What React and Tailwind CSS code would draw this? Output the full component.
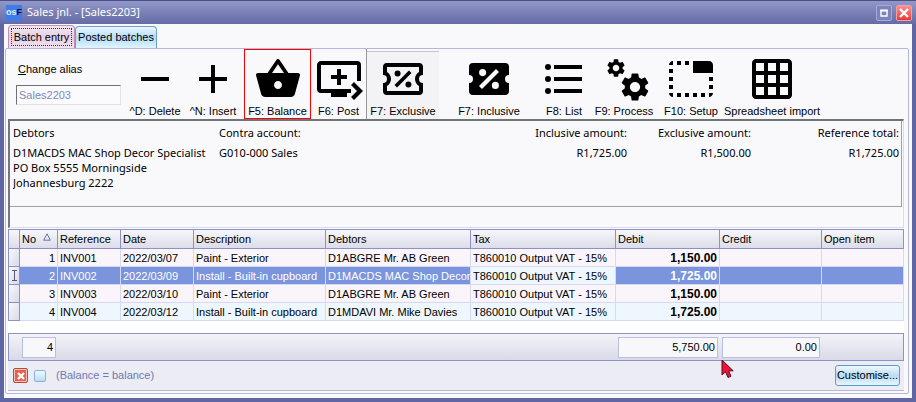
import React from "react";
import {
  MdAdd,
  MdGridOn,
  MdQueuePlayNext,
  MdRemove,
  MdSettings,
  MdShoppingBasket,
  MdTabUnselected,
} from "react-icons/md";

const PERCENT =
  "M15.5 7L17 8.5L8.5 17L7 15.5L15.5 7M8.81 7.04A1.77 1.77 0 0 1 8.81 10.58A1.77 1.77 0 0 1 8.81 7.04M15.19 13.42A1.77 1.77 0 0 1 15.19 16.96A1.77 1.77 0 0 1 15.19 13.42Z";
const TICKET =
  "M4 4A2 2 0 0 0 2 6V10A2 2 0 0 1 4 12A2 2 0 0 1 2 14V18A2 2 0 0 0 4 20H20A2 2 0 0 0 22 18V14A2 2 0 0 1 20 12A2 2 0 0 1 22 10V6A2 2 0 0 0 20 4Z";
const TICKET_INSIDE =
  "M4 6V8.54C5.24 9.26 6 10.57 6 12S5.24 14.74 4 15.46V18H20V15.46C18.76 14.74 18 13.43 18 12S18.76 9.26 20 8.54V6Z";

function TicketSolid() {
  return (
    <svg viewBox="0 0 24 24" className="size-12" aria-hidden="true">
      <path fillRule="evenodd" d={TICKET + PERCENT} />
    </svg>
  );
}

function TicketOutline() {
  return (
    <svg viewBox="0 0 24 24" className="size-12" aria-hidden="true">
      <path fillRule="evenodd" d={TICKET + TICKET_INSIDE} />
      <g transform="translate(12 12) scale(.85) translate(-12 -12)">
        <path d={PERCENT} />
      </g>
    </svg>
  );
}

function BulletList() {
  return (
    <svg viewBox="0 0 24 24" className="size-12" aria-hidden="true">
      <path d="M7 5H21V7H7ZM7 11H21V13H7ZM7 17H21V19H7Z" />
      <circle cx="4" cy="6" r="1.5" />
      <circle cx="4" cy="12" r="1.5" />
      <circle cx="4" cy="18" r="1.5" />
    </svg>
  );
}

function Cogs() {
  return (
    <svg viewBox="0 0 48 48" className="size-12 overflow-visible" aria-hidden="true">
      <MdSettings x="5" y="2" size={22} />
      <MdSettings x="18" y="15" size={34} />
    </svg>
  );
}

const TOOLS = [
  { label: "^D: Delete", icon: <MdRemove className="size-12" />, cls: "w-[50px]" },
  { label: "^N: Insert", icon: <MdAdd className="size-12" />, cls: "ml-1.5 w-[54px]" },
  {
    label: "F5: Balance",
    icon: <MdShoppingBasket className="size-12" />,
    cls: "ml-1 w-[67px] outline outline-1 -outline-offset-1 outline-[#ff0000]",
  },
  { label: "F6: Post", icon: <MdQueuePlayNext className="size-12" />, cls: "w-[55px]" },
  {
    label: "F7: Exclusive",
    icon: <TicketOutline />,
    cls: "w-[73px] border-l border-[#9a9a9e] bg-linear-to-b from-transparent from-[2px] via-[#9a9a9e] via-[2px] to-[#f3f3f5] to-[3px]",
  },
  { label: "F7: Inclusive", icon: <TicketSolid />, cls: "ml-4 w-[68px]" },
  { label: "F8: List", icon: <BulletList />, cls: "ml-4 w-[50px]" },
  { label: "F9: Process", icon: <Cogs />, cls: "ml-1 w-[62px]" },
  { label: "F10: Setup", icon: <MdTabUnselected className="size-12" />, cls: "ml-1.5 w-[60px]" },
  { label: "Spreadsheet import", icon: <MdGridOn className="size-12" />, cls: "ml-1 w-[94px]" },
];

const ROWS = [
  ["1", "INV001", "2022/03/07", "Paint - Exterior", "D1ABGRE Mr. AB Green", "1,150.00"],
  ["2", "INV002", "2022/03/09", "Install - Built-in cupboard", "D1MACDS MAC Shop Decor", "1,725.00"],
  ["3", "INV003", "2022/03/10", "Paint - Exterior", "D1ABGRE Mr. AB Green", "1,150.00"],
  ["4", "INV004", "2022/03/12", "Install - Built-in cupboard", "D1MDAVI Mr. Mike Davies", "1,725.00"],
];

const HEADS = ["No", "Reference", "Date", "Description", "Debtors", "Tax", "Debit", "Credit", "Open item"];

const HEAD_CELL =
  "h-[19px] overflow-hidden border-b border-r border-[#8c93c4] bg-linear-to-b from-[#f6f6fa] to-[#dcdde9] p-0 pl-0.5 text-left font-normal whitespace-nowrap";

function TitleBar() {
  return (
    <header className="flex h-6 items-center border-t border-[#4a4f85] bg-linear-to-b from-[#9297c8] via-[#7b81b6] to-[#656ba6] pr-1 pl-1.5">
      <span className="flex size-4 items-center justify-center bg-[#3f7ce8] text-[9px] font-bold text-white" aria-hidden="true">
        <span className="text-[#e4f0ff]">os</span>
        <span className="text-[#0b1230]">F</span>
      </span>
      <h1 className="ml-[5px] font-['Noto_Sans','Open_Sans',sans-serif] text-[11px] text-white">Sales jnl. - [Sales2203]</h1>
      <button type="button" aria-label="Maximise" className="ml-auto flex size-4 items-center justify-center rounded-xs border border-[#a5abd6] bg-[#7c83b8]">
        <svg viewBox="0 0 8 8" className="size-2" aria-hidden="true">
          <path d="M1 1.5H7V7H1Z" fill="none" stroke="white" strokeWidth="1.4" />
          <path d="M.3 .6H7.7V2.4H.3Z" fill="white" />
        </svg>
      </button>
      <button type="button" aria-label="Close" className="ml-1 flex size-4 items-center justify-center rounded-xs border border-[#f3a0a6] bg-linear-to-b from-[#f49090] to-[#ee3030]">
        <svg viewBox="0 0 8 8" className="size-2.5" aria-hidden="true">
          <path d="M.8 .8L7.2 7.2M7.2 .8L.8 7.2" stroke="white" strokeWidth="1.9" />
        </svg>
      </button>
    </header>
  );
}

function Toolbar() {
  return (
    <div className="flex h-[70px] items-stretch">
      <div className="ml-2 flex w-[105px] flex-col pt-3">
        <label htmlFor="alias" className="pl-0.5 leading-4">
          <u>C</u>hange alias
        </label>
        <input
          id="alias"
          defaultValue="Sales2203"
          className="mt-2 h-5 w-full border border-t-[#707070] border-r-[#e2e2e4] border-b-[#e2e2e4] border-l-[#707070] bg-[#fbfbfd] px-0.5 text-[#8088b8] outline-none"
        />
      </div>
      <div className="ml-[9px] flex">
        {TOOLS.map((t) => (
          <button key={t.label} type="button" className={"flex h-full shrink-0 flex-col items-center pt-1.5 whitespace-nowrap " + t.cls}>
            {t.icon}
            <span className="leading-4">{t.label}</span>
          </button>
        ))}
      </div>
    </div>
  );
}

function Details() {
  return (
    <section className="h-[109px] border-t-2 border-r border-b border-l-2 border-t-[#6f7476] border-r-[#dcdce4] border-b-[#dcdce4] border-l-[#77777b] font-['Noto_Sans','Open_Sans',sans-serif] text-[11px]">
      <div className="mr-px grid h-[86px] grid-cols-[206px_284px_124px_124px_1fr] border-r border-b border-[#a0a0a0] pt-1 pr-0.5 pl-[3px] whitespace-nowrap">
        <div className="overflow-hidden">
          <div className="mb-1 leading-4">Debtors</div>
          <div className="leading-[15px]">D1MACDS MAC Shop Decor Specialist</div>
          <div className="leading-[15px]">PO Box 5555 Morningside</div>
          <div className="leading-[15px]">Johannesburg 2222</div>
        </div>
        <div>
          <div className="mb-1 leading-4">Contra account:</div>
          <div className="leading-[15px]">G010-000 Sales</div>
        </div>
        {[
          ["Inclusive amount:", "R1,725.00"],
          ["Exclusive amount:", "R1,500.00"],
          ["Reference total:", "R1,725.00"],
        ].map(([label, value]) => (
          <div key={label} className="text-right">
            <div className="mb-1 leading-4">{label}</div>
            <div className="leading-[15px]">{value}</div>
          </div>
        ))}
      </div>
    </section>
  );
}

function Ledger() {
  return (
    <table className="w-full table-fixed border-separate border-spacing-0 border-t border-l border-[#8c93c4] leading-4">
      <colgroup>
        <col className="w-[11px]" />
        <col className="w-[38px]" />
        <col className="w-[63px]" />
        <col className="w-[73px]" />
        <col className="w-[132px]" />
        <col className="w-[145px]" />
        <col className="w-[145px]" />
        <col className="w-[104px]" />
        <col className="w-[102px]" />
        <col />
      </colgroup>
      <thead>
        <tr>
          <td className={HEAD_CELL} />
          {HEADS.map((h) => (
            <th key={h} scope="col" className={HEAD_CELL}>
              {h === "No" ? (
                <span className="flex items-center justify-between pr-1.5">
                  No
                  <svg viewBox="0 0 8 8" className="mb-1 size-2" aria-hidden="true">
                    <path d="M4 .8L7.3 7.2H.7Z" fill="none" stroke="#6870b0" />
                  </svg>
                </span>
              ) : (
                h
              )}
            </th>
          ))}
        </tr>
      </thead>
      <tbody>
        {ROWS.map((r, i) => {
          const selected = i === 1;
          const plain = i % 2 ? "bg-[#eef6fe]" : "bg-[#faf5fa]";
          const cell =
            "h-[18px] overflow-hidden border-r border-b border-[#d6d9f2] p-0 whitespace-nowrap " +
            (selected ? "bg-[#7a95de] text-white" : plain);
          return (
            <tr key={r[0]}>
              <td className="h-[18px] border-r border-b border-[#8c93c4] bg-linear-to-br from-[#f8f8fc] to-[#d9dae8] p-0">
                {selected && (
                  <svg viewBox="0 0 7 11" className="mx-auto h-[11px] w-[7px]" aria-label="Editing">
                    <path d="M1 .5H6M1 10.5H6M3.5 .5V10.5" stroke="#555a78" fill="none" />
                  </svg>
                )}
              </td>
              <td className={cell + " pr-0.5 text-right"}>{r[0]}</td>
              <td className={cell + " pl-0.5"}>{r[1]}</td>
              <td className={cell + " pl-0.5"}>{r[2]}</td>
              <td className={cell + " pl-0.5"}>{r[3]}</td>
              <td className={cell + " pl-0.5"}>{r[4]}</td>
              <td className={"h-[18px] overflow-hidden border-r border-b border-[#d6d9f2] p-0 pl-0.5 whitespace-nowrap " + plain}>
                T860010 Output VAT - 15%
              </td>
              <td className={cell + " pr-0.5 text-right text-xs font-bold"}>{r[5]}</td>
              <td className={cell} />
              <td className={cell} />
            </tr>
          );
        })}
      </tbody>
    </table>
  );
}

const TOTAL = "flex h-[21px] items-center justify-end border border-[#b9bfdf] bg-[#f8f8fc] pr-0.5";

export default function App() {
  return (
    <main className="flex min-h-screen flex-col bg-[#656ba6] font-['Liberation_Sans',Arial,sans-serif] text-[11px] text-black">
      <TitleBar />
      <div className="flex grow flex-col border-x-4 border-b-4 border-[#5f66a3] bg-[#f9f9fc]">
        <nav className="flex h-6 items-end pl-1">
          <button type="button" className="mt-px h-[23px] w-[67px] self-start rounded-t-sm border border-b-0 border-[#c58fb4] bg-linear-to-b from-[#f3e8f2] via-[#e6cfe2] to-[#f0e2ef] px-0.5">
            <span className="block border border-dotted border-[#333] leading-4 whitespace-nowrap">Batch entry</span>
          </button>
          <button type="button" className="h-[22px] w-[82px] rounded-t-sm border border-b-0 border-[#6a9fd2] bg-linear-to-b from-[#eaf6ff] via-[#b4dcfa] to-[#e0f4ff] whitespace-nowrap">
            Posted batches
          </button>
        </nav>
        <div className="mr-[3px] mb-1 ml-px flex grow flex-col rounded-xs border border-[#b4b9dc] pr-1 pb-0.5 pl-0.5">
          <Toolbar />
          <Details />
          <div className="mt-px flex grow flex-col border-b border-[#b4b9dc] bg-white">
            <Ledger />
            <div className="mt-3 flex h-7 items-center border border-[#8c93c4] bg-linear-to-b from-[#f3f3f8] to-[#d9dae7]">
              <output aria-label="Entries" className={TOTAL + " ml-[13px] w-[34px]"}>4</output>
              <output aria-label="Total debit" className={TOTAL + " ml-[562px] w-[100px]"}>5,750.00</output>
              <div className="relative ml-1">
                <output aria-label="Total credit" className={TOTAL + " w-[98px]"}>0.00</output>
                <svg viewBox="0 0 14 20" className="absolute top-[22px] -left-px h-5 w-3.5" aria-hidden="true">
                  <path d="M1 1V16L4.5 12.8L7 18.5L10 17.2L7.6 11.8H12.2Z" fill="#f2103c" stroke="#4a1020" />
                </svg>
              </div>
            </div>
            <footer className="flex grow items-center bg-[#ececf5] pr-1 pl-[5px]">
              <button type="button" aria-label="Clear filter" className="flex size-[15px] items-center justify-center rounded-xs border border-[#c04838] bg-[#e8604e] ring-1 ring-[#f4c4bc] ring-inset">
                <svg viewBox="0 0 8 8" className="size-2" aria-hidden="true">
                  <path d="M1 1L7 7M7 1L1 7" stroke="white" strokeWidth="2.4" />
                </svg>
              </button>
              <input type="checkbox" id="balance" className="ml-1.5 size-3 appearance-none rounded-xs border border-[#88b4dc] bg-linear-to-b from-[#eef8ff] to-[#b9def8]" />
              <label htmlFor="balance" className="ml-2.5 text-[#7078b4]">(Balance = balance)</label>
              <button type="button" className="ml-auto h-[21px] w-[65px] rounded-[3px] border border-[#5f9bc8] bg-linear-to-b from-[#f0f8fe] via-[#bcdcf2] to-[#e4f6ff] whitespace-nowrap">
                Customise...
              </button>
            </footer>
          </div>
        </div>
      </div>
    </main>
  );
}
